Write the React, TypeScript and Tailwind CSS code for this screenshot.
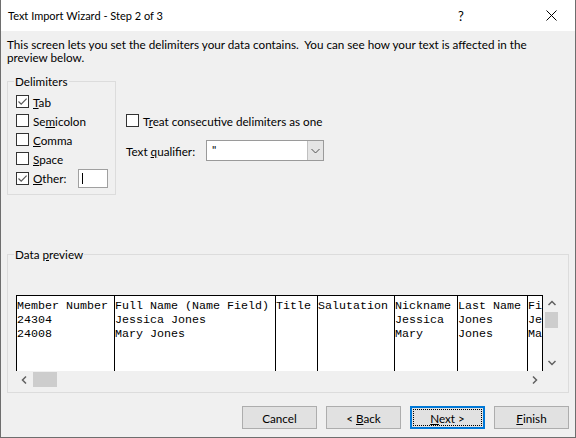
import React from "react";

const sans = "font-['Lato',sans-serif] text-[11.7px] leading-[14px] text-black";
const mono = "font-['Liberation_Mono',monospace] text-[11.67px] leading-[14px] text-black";

const columns = [
  { width: "w-[98px]", rows: ["Member Number", "24304", "24008"] },
  { width: "w-[161px]", rows: ["Full Name (Name Field)", "Jessica Jones", "Mary Jones"] },
  { width: "w-[42px]", rows: ["Title", "", ""] },
  { width: "w-[77px]", rows: ["Salutation", "", ""] },
  { width: "w-[63px]", rows: ["Nickname", "Jessica", "Mary"] },
  { width: "w-[70px]", rows: ["Last Name", "Jones", "Jones"] },
  { width: "w-[15px]", rows: ["First Name", "Jessica", "Mary"] },
];

function CheckBox({ checked }: { checked?: boolean }) {
  return (
    <span className="w-[13px] h-[13px] border border-[#333333] bg-white flex items-center justify-center shrink-0">
      {checked && (
        <svg width="11" height="11" viewBox="0 0 11 11">
          <path d="M1.5 5.5 L4.2 8.2 L9.6 2.6" stroke="#5a5a5a" strokeWidth="1.2" fill="none" />
        </svg>
      )}
    </span>
  );
}

function Chevron({ dir }: { dir: "up" | "down" | "left" | "right" }) {
  const d = {
    up: "M1.5 6 L5 2.5 L8.5 6",
    down: "M1.5 3 L5 6.5 L8.5 3",
    left: "M6 1.5 L2.5 5 L6 8.5",
    right: "M3 1.5 L6.5 5 L3 8.5",
  }[dir];
  return (
    <svg width="9" height="9" viewBox="0 0 9 9">
      <path d={d} stroke="#606060" strokeWidth="1.5" fill="none" />
    </svg>
  );
}

function Delim({ checked, label }: { checked?: boolean; label: React.ReactNode }) {
  return (
    <div className="flex items-center gap-[4px] h-[19px]">
      <CheckBox checked={checked} />
      <span>{label}</span>
    </div>
  );
}

function Button({ children, focused }: { children: React.ReactNode; focused?: boolean }) {
  return (
    <div
      className={
        focused
          ? "w-[75px] h-[23px] bg-[#e1e1e1] border-2 border-[#0078d7] p-[1px]"
          : "w-[75px] h-[23px] bg-[#e1e1e1] border border-[#adadad] flex items-center justify-center"
      }
    >
      {focused ? (
        <div className="w-full h-full border border-dotted border-black flex items-center justify-center">
          <span className="whitespace-pre">{children}</span>
        </div>
      ) : (
        <span className="whitespace-pre">{children}</span>
      )}
    </div>
  );
}

export default function App() {
  return (
    <div className={`w-[576px] h-[438px] bg-[#f0f0f0] border-x border-b border-[#6e6e6e] flex flex-col ${sans}`}>
      {/* Title bar */}
      <div className="h-[31px] bg-white flex items-center shrink-0">
        <span className="pl-[7px] flex-1 text-[11px]">Text Import Wizard - Step 2 of 3</span>
        <span className="w-[10px] mr-[78px] text-[13px]">?</span>
        <svg width="11" height="11" viewBox="0 0 11 11" className="mr-[18px]">
          <path d="M0.5 0.5 L10.5 10.5 M10.5 0.5 L0.5 10.5" stroke="#000" strokeWidth="1" />
        </svg>
      </div>

      <div className="pl-[6px] pt-[7px] leading-[13px] whitespace-nowrap">
        <p>This screen lets you set the delimiters your data contains.&nbsp; You can see how your text is affected in the</p>
        <p>preview below.</p>
      </div>

      <div className="flex mt-[10px]">
        <fieldset className="ml-[6px] w-[109px] h-[121px] border border-[#dcdcdc] pl-[8px] pt-[4px]">
          <legend className="-ml-[2px] px-[1px]">Delimiters</legend>
          <Delim checked label={<><u>T</u>ab</>} />
          <Delim label={<>Se<u>m</u>icolon</>} />
          <Delim label={<><u>C</u>omma</>} />
          <Delim label={<><u>S</u>pace</>} />
          <div className="flex items-center h-[20px]">
            <CheckBox checked />
            <span className="ml-[4px] w-[45px]">
              <u>O</u>ther:
            </span>
            <div className="w-[30px] h-[19px] bg-white border border-[#a0a0a0] flex items-center pl-[3px]">
              <span className="w-[1px] h-[11px] bg-black" />
            </div>
          </div>
        </fieldset>

        <div className="ml-[10px] pt-[37px]">
          <div className="flex items-center gap-[4px] h-[19px]">
            <CheckBox />
            <span>
              T<u>r</u>eat consecutive delimiters as one
            </span>
          </div>
          <div className="flex items-center mt-[10px]">
            <span className="w-[80px]">
              Text <u>q</u>ualifier:
            </span>
            <div className="w-[118px] h-[21px] bg-white border border-[#9a9a9a] flex">
              <span className="flex-1 pl-[5px] leading-[17px]">"</span>
              <div className="w-[16px] bg-[#e5e5e5] border-l border-[#c0c0c0] flex items-center justify-center">
                <svg width="9" height="6" viewBox="0 0 9 6">
                  <path d="M0.5 1 L4.5 5 L8.5 1" stroke="#505050" strokeWidth="1" fill="none" />
                </svg>
              </div>
            </div>
          </div>
        </div>
      </div>

      <fieldset className="ml-[6px] mt-[52px] w-[562px] h-[146px] border border-[#dcdcdc] pl-[8px]">
        <legend className="-ml-[2px] px-[1px]">
          Data <u>p</u>review
        </legend>
        <div className="mt-[34px] flex flex-col">
          <div className="flex">
            <div className="w-[527px] h-[76px] bg-white border-t border-r border-black flex overflow-hidden">
              {columns.map((col, i) => (
                <div key={i} className={`${col.width} shrink-0 border-l border-black pt-[3px] overflow-hidden whitespace-pre ${mono}`}>
                  {col.rows.map((r, j) => (
                    <div key={j} className="h-[14px]">
                      {r}
                    </div>
                  ))}
                </div>
              ))}
            </div>
            <div className="w-[17px] h-[76px] flex flex-col">
              <div className="h-[17px] flex items-center justify-center">
                <Chevron dir="up" />
              </div>
              <div className="h-[16px] mx-[2px] bg-[#cdcdcd]" />
              <div className="flex-1" />
              <div className="h-[17px] flex items-center justify-center">
                <Chevron dir="down" />
              </div>
            </div>
          </div>
          <div className="flex h-[17px]">
            <div className="w-[527px] flex">
              <div className="w-[17px] flex items-center justify-center">
                <Chevron dir="left" />
              </div>
              <div className="w-[24px] my-[1px] bg-[#cdcdcd]" />
              <div className="flex-1" />
              <div className="w-[17px] flex items-center justify-center">
                <Chevron dir="right" />
              </div>
            </div>
          </div>
        </div>
      </fieldset>

      <div className="flex justify-end gap-[9px] pr-[6px] mt-[13px]">
        <Button>Cancel</Button>
        <Button>
          {"< "}
          <u>B</u>ack
        </Button>
        <Button focused>
          <u>N</u>ext{" >"}
        </Button>
        <Button>
          <u>F</u>inish
        </Button>
      </div>
    </div>
  );
}
